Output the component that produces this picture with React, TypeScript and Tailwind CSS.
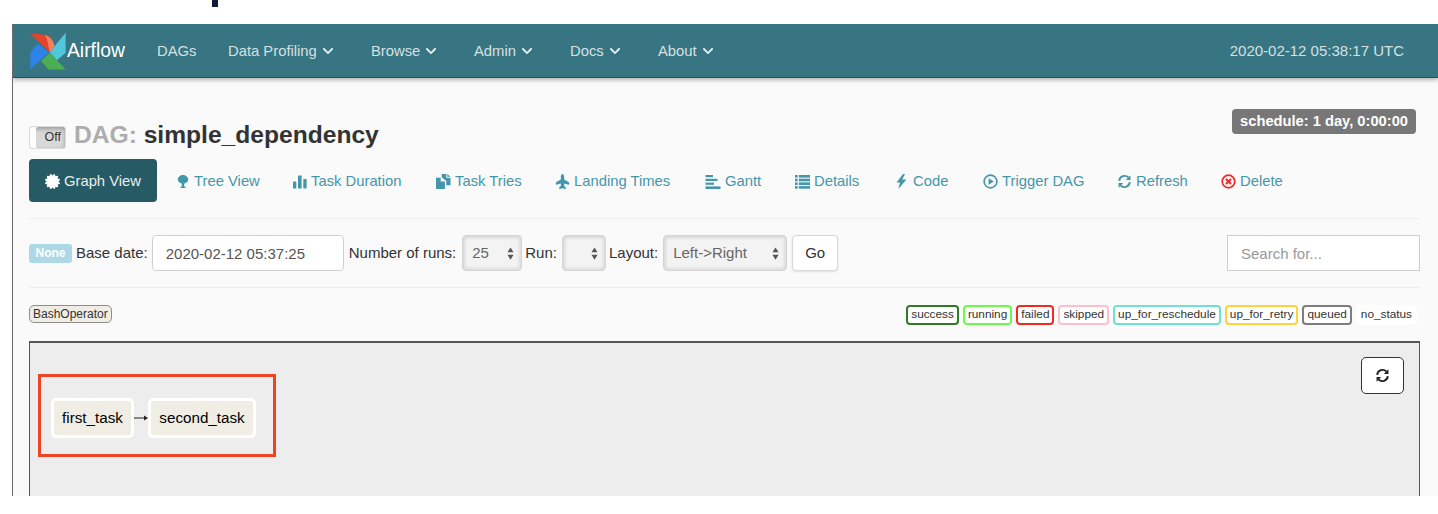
import React from "react";
import { FaChevronDown, FaPlane, FaCertificate } from "react-icons/fa";

const Chev = () => <FaChevronDown className="ml-[5px] w-[12px] h-[12px] text-[#e4ebec]" />;

const NavItem = ({ label, w, menu }: { label: string; w: string; menu?: boolean }) => (
  <div className={`flex items-center ${w}`}>
    <span>{label}</span>
    {menu && <Chev />}
  </div>
);

const Sync = ({ className }: { className?: string }) => (
  <svg viewBox="0 0 24 24" className={className} fill="none" stroke="currentColor" strokeWidth="3" strokeLinecap="butt">
    <path d="M3.500 11a8.700 8.700 0 0 1 15-5.200" />
    <path d="M20.500 13a8.700 8.700 0 0 1-15 5.200" />
    <path d="M21.500 2v7.500H14z" fill="currentColor" stroke="none" />
    <path d="M2.500 22v-7.500H10z" fill="currentColor" stroke="none" />
  </svg>
);

const icons: Record<string, React.ReactNode> = {
  tree: (
    <svg viewBox="0 0 16 16" className="w-[14px] h-[15px]" fill="currentColor">
      <path d="M8 0.5c3 0 5.800 2.200 6 5 .1 2.300-1.800 4.500-4.600 4.700V14h1.500v1.500H5.100V14h1.500v-3.800C3.800 10 1.900 7.800 2 5.500c.2-2.800 3-5 6-5z" />
    </svg>
  ),
  stats: (
    <svg viewBox="0 0 14 14" className="w-[14px] h-[15px]" fill="currentColor">
      <rect x="0" y="7" width="3.300" height="7" rx="0.5" />
      <rect x="5" y="1" width="3.600" height="13" rx="0.5" />
      <rect x="10.300" y="4.500" width="3.300" height="9.500" rx="0.5" />
    </svg>
  ),
  dup: (
    <svg viewBox="0 0 16 16" className="w-[15px] h-[15px]" fill="currentColor">
      <path d="M0 4h5v4h4.500v8H0z" />
      <path d="M6 3.500V0h5v4h4.500v8H11V7.500L6 3.500z" />
      <path d="M12 0l3.500 3H12z" />
    </svg>
  ),
  plane: <FaPlane className="w-[15px] h-[15px] -rotate-90" />,
  gantt: (
    <svg viewBox="0 0 15 14" className="w-[16px] h-[14px]" fill="currentColor">
      <rect x="0" y="0" width="7.500" height="2.200" />
      <rect x="0" y="3.800" width="12" height="2.200" />
      <rect x="0" y="7.600" width="8.500" height="2.200" />
      <rect x="0" y="11.400" width="15" height="2.600" />
    </svg>
  ),
  list: (
    <svg viewBox="0 0 15 14" className="w-[15px] h-[14px]" fill="currentColor">
      {[0, 3.700, 7.400, 11.100].map((y) => (
        <g key={y}>
          <rect x="0" y={y} width="2.600" height="2.600" />
          <rect x="3.800" y={y} width="11.200" height="2.600" />
        </g>
      ))}
    </svg>
  ),
  flash: (
    <svg viewBox="0 0 10 15" className="w-[11px] h-[15px] mr-[2px]" fill="currentColor">
      <path d="M6.500 0L0 8.500h3.500L1.800 15 10 5.500H5.800L8.500 0z" />
    </svg>
  ),
  play: (
    <svg viewBox="0 0 16 16" className="w-[15px] h-[15px]">
      <circle cx="8" cy="8" r="6.800" fill="none" stroke="currentColor" strokeWidth="1.800" />
      <path d="M6 4.500L11.500 8 6 11.500z" fill="currentColor" />
    </svg>
  ),
  sync: <Sync className="w-[15px] h-[15px]" />,
  del: (
    <svg viewBox="0 0 16 16" className="w-[15px] h-[15px] text-[#ef2b2b]">
      <circle cx="8" cy="8" r="6.700" fill="none" stroke="currentColor" strokeWidth="1.900" />
      <path d="M5.300 5.300l5.400 5.400M10.700 5.300l-5.400 5.400" fill="none" stroke="currentColor" strokeWidth="2.200" />
    </svg>
  ),
};

const tabs = [
  { icon: "tree", label: "Tree View", w: "w-[117px]" },
  { icon: "stats", label: "Task Duration", w: "w-[143px]" },
  { icon: "dup", label: "Task Tries", w: "w-[119px]" },
  { icon: "plane", label: "Landing Times", w: "w-[150px]" },
  { icon: "gantt", label: "Gantt", w: "w-[90px]" },
  { icon: "list", label: "Details", w: "w-[101px]" },
  { icon: "flash", label: "Code", w: "w-[87px]" },
  { icon: "play", label: "Trigger DAG", w: "w-[134px]" },
  { icon: "sync", label: "Refresh", w: "w-[104px]" },
  { icon: "del", label: "Delete", w: "w-[72px]" },
];

const legend = [
  { label: "success", cls: "border-[#2f7d22]" },
  { label: "running", cls: "border-[#6cfb4a]" },
  { label: "failed", cls: "border-[#f0291e]" },
  { label: "skipped", cls: "border-[#fcc0ca]" },
  { label: "up_for_reschedule", cls: "border-[#6fe0d6]" },
  { label: "up_for_retry", cls: "border-[#fdd23c]" },
  { label: "queued", cls: "border-[#7d7d7d]" },
  { label: "no_status", cls: "border-white" },
];

const Arrows = () => (
  <svg viewBox="0 0 8 14" className="w-[7px] h-[13px] text-[#555]" fill="currentColor">
    <path d="M4 0l3.500 5.500h-7zM4 14L.5 8.500h7z" />
  </svg>
);

const Select = ({ value, w }: { value: string; w: string }) => (
  <div
    className={`${w} h-[36px] flex items-center justify-between pl-[9px] pr-[7px] rounded-[4px] border border-[#d4d4d4] bg-[#f3f3f3] shadow-[inset_2px_2px_3px_#d8d8d8,inset_-2px_-2px_3px_#dcdcdc] text-[#666]`}
  >
    <span>{value}</span>
    <Arrows />
  </div>
);

export default function App() {
  return (
    <div className="w-[1438px] h-[514px] bg-white overflow-hidden font-['Liberation_Sans',Arial,sans-serif] text-[14.800px] text-[#333]">
      <div className="h-[24px] pl-[212px]">
        <div className="w-[6px] h-[7px] bg-[#0f1d38]" />
      </div>
      <div className="ml-[12px] h-[472px] border-l border-[#6b6b6b] bg-[#fafafa] overflow-hidden">
        <nav className="h-[54px] pt-[1px] bg-[#367581] border-b border-[#234f58] shadow-[0_2px_4px_#b0b0b0] flex items-center pl-[16px] pr-[34px] text-[#d6e0e2]">
          <div className="flex items-center w-[128px]">
            <svg viewBox="58 38 114 116" className="w-[38px] h-[39px] shrink-0">
              <path d="M60 42L106 46Q130 55 135 80L120 98Z" fill="#e2432a" />
              <path d="M106 46Q130 55 135 80L120 98L112 60Z" fill="#f2805f" />
              <path d="M168 40L168 100L142 122L120 98Z" fill="#52c6da" />
              <path d="M120 100L168 150L116 150L94 124Z" fill="#4cae54" />
              <path d="M62 150L62 100L84 72L118 98Z" fill="#2f82e8" />
            </svg>
            <span className="text-[19.300px] text-white">Airflow</span>
          </div>
          <NavItem label="DAGs" w="w-[71px]" />
          <NavItem label="Data Profiling" w="w-[143px]" menu />
          <NavItem label="Browse" w="w-[103px]" menu />
          <NavItem label="Admin" w="w-[96px]" menu />
          <NavItem label="Docs" w="w-[88px]" menu />
          <NavItem label="About" w="w-[71px]" menu />
          <span className="ml-auto text-[15px]">2020-02-12 05:38:17 UTC</span>
        </nav>

        <div className="pl-[16px] pr-[18px]">
          <div className="h-[81px] flex justify-between">
            <div className="flex items-end pb-[9px]">
              <div className="w-[37px] h-[23px] mb-[1px] mr-[8px] rounded-[3px] border border-[#dcdcdc] bg-[#d8d8d8] flex items-center justify-end pr-[4px] text-[12.500px] shadow-[inset_6px_0_0_#fff,inset_0_2px_4px_#999]">
                Off
              </div>
              <h1 className="text-[24.600px] leading-[30px] font-bold text-[#adadad]">
                DAG: <span className="text-[#333]">simple_dependency</span>
              </h1>
            </div>
            <div className="mt-[31px] mr-[4px] h-[25px] px-[8px] rounded-[4px] bg-[#777] text-white font-bold text-[14.700px] flex items-center">
              schedule: 1 day, 0:00:00
            </div>
          </div>

          <div className="flex items-center h-[43px]">
            <div className="w-[128px] h-[43px] pt-[1px] mr-[19px] rounded-[4px] bg-[#265b65] text-[#e8eeef] flex items-center justify-center gap-[4px]">
              <FaCertificate className="w-[15px] h-[15px] text-white" />
              Graph View
            </div>
            {tabs.map((t) => (
              <div key={t.label} className={`${t.w} shrink-0 pt-[2px] flex items-center gap-[4px] text-[#4497aa]`}>
                {icons[t.icon]}
                <span>{t.label}</span>
              </div>
            ))}
          </div>

          <div className="mt-[16px] border-t border-[#eeeeee] h-[69px] flex items-center justify-between text-[15px]">
            <div className="flex items-center">
              <span className="w-[43px] h-[19px] mr-[4px] rounded-[3px] bg-[#add8e6] text-white text-[12px] font-bold flex items-center justify-center">
                None
              </span>
              <span>Base date:</span>
              <input
                readOnly
                value="2020-02-12 05:37:25"
                className="w-[192px] h-[36px] ml-[4px] mr-[5px] px-[13px] bg-white border border-[#d0d0d0] rounded-[4px] text-[#555] outline-none"
              />
              <span className="mr-[6px]">Number of runs:</span>
              <Select value="25" w="w-[60px]" />
              <span className="ml-[3px] mr-[5px]">Run:</span>
              <Select value="" w="w-[44px]" />
              <span className="ml-[3px] mr-[5px]">Layout:</span>
              <Select value="Left->Right" w="w-[124px]" />
              <div className="w-[46px] h-[36px] ml-[5px] bg-white border border-[#d8d8d8] rounded-[4px] shadow-[0_1px_2px_#ddd] flex items-center justify-center">
                Go
              </div>
            </div>
            <input
              readOnly
              placeholder="Search for..."
              className="w-[193px] h-[36px] px-[13px] bg-white border border-[#cfcfcf] placeholder:text-[#999] outline-none"
            />
          </div>

          <div className="border-t border-[#eeeeee] h-[54px] flex items-start justify-between pt-[17px] text-[11.800px]">
            <span className="h-[18px] px-[3px] border border-[#8d8d8d] rounded-[5px] bg-[#f0ede4] text-[12px] flex items-center">
              BashOperator
            </span>
            <div className="flex gap-[4px] mr-[3px]">
              {legend.map((l) => (
                <span key={l.label} className={`h-[20px] px-[3px] border-2 rounded-[4px] bg-white flex items-center ${l.cls}`}>
                  {l.label}
                </span>
              ))}
            </div>
          </div>

          <div className="h-[200px] border border-[#555] border-t-2 bg-[#ededed] flex items-start justify-between pt-[31px] pl-[8px] pr-[15px] text-[15.200px]">
            <div className="w-[238px] h-[83px] pt-[5px] border-[3px] border-[#ef4423] flex items-center pl-[10px]">
              <div className="h-[40px] w-[83px] pt-[1px] justify-center rounded-[5px] border-[3px] border-white bg-[#f0ede4] text-black flex items-center">
                first_task
              </div>
              <svg viewBox="0 0 14 8" className="w-[14px] h-[8px] text-[#222]">
                <path d="M0 4h11" stroke="currentColor" strokeWidth="1" />
                <path d="M10 1.500L14 4l-4 2.500z" fill="currentColor" />
              </svg>
              <div className="h-[40px] w-[108px] pt-[1px] justify-center rounded-[5px] border-[3px] border-white bg-[#f0ede4] text-black flex items-center">
                second_task
              </div>
            </div>
            <div className="w-[43px] h-[37px] -mt-[17px] rounded-[5px] border border-[#333] bg-white flex items-center justify-center text-[#222]">
              <Sync className="w-[15px] h-[15px]" />
            </div>
          </div>
        </div>
      </div>
    </div>
  );
}
